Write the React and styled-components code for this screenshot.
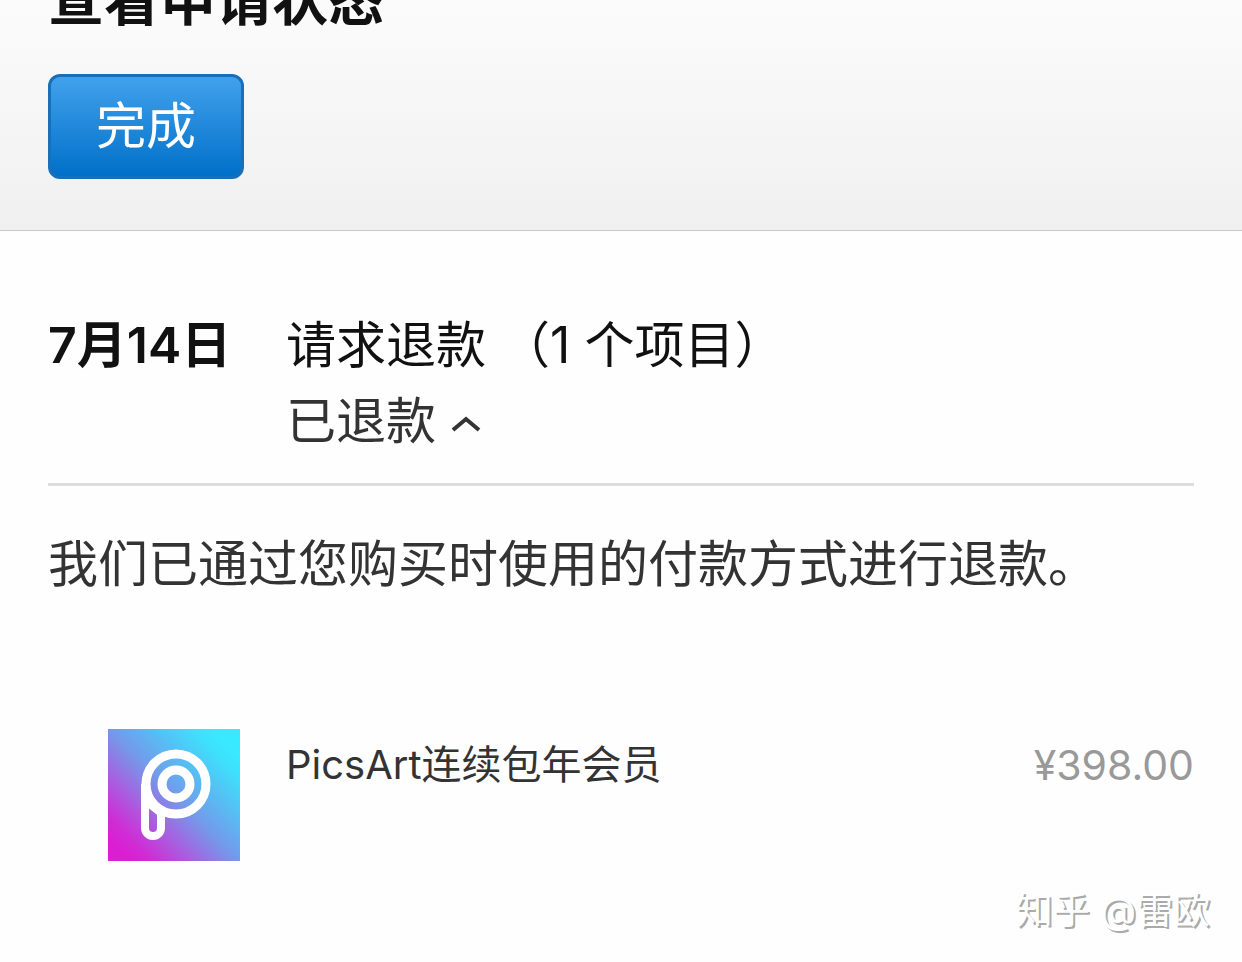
import React, { useState } from "react";
import styled, { createGlobalStyle } from "styled-components";

const GlobalStyle = createGlobalStyle`
  *, *::before, *::after { box-sizing: border-box; }
  body {
    margin: 0;
    background: #fefefe;
    color: #333;
    font-family: Inter, "Noto Sans CJK SC", sans-serif;
    font-size: 50px;
    line-height: 76px;
  }
  h1, h2, p, ul { margin: 0; padding: 0; }
`;

const Page = styled.div`
  overflow: hidden;
`;

const Header = styled.header`
  margin-top: -32px;
  padding: 0 48px 51px;
  border-bottom: 1px solid #c8c8c8;
  background: linear-gradient(#fdfdfd, #f0f0f0);
`;

const Title = styled.h1`
  margin-bottom: 42px;
  color: #111;
  font-size: 56px;
  line-height: 64px;
  font-weight: 700;
`;

const DoneButton = styled.button`
  display: block;
  padding: 11px 45px 12px;
  border: 3px solid #1a70b8;
  border-radius: 12px;
  background: #1a70b8 linear-gradient(#42a1ec, #0070c9) no-repeat padding-box border-box;
  color: #fff;
  font: inherit;
  font-size: 50px;
  cursor: pointer;
`;

const Main = styled.main`
  padding: 76px 48px 0;
`;

const Request = styled.section`
  display: grid;
  grid-template-columns: 238px 1fr;
  padding-bottom: 24px;
  border-bottom: 3px solid #ddd;
`;

const RequestDate = styled.time`
  color: #111;
  font-weight: 600;
`;

const RequestTitle = styled.h2`
  color: #111;
  font-size: 50px;
  font-weight: 400;
`;

const StatusToggle = styled.button`
  display: flex;
  align-items: center;
  gap: 15px;
  padding: 0;
  border: 0;
  background: none;
  color: #333;
  font: inherit;
  cursor: pointer;
`;

const Chevron = styled.svg`
  width: 30px;
  height: 18px;
  margin-top: 6px;
  transform: ${({ $open }) => ($open ? "none" : "rotate(180deg)")};
`;

const Message = styled.p`
  margin-top: 40px;
`;

const ItemList = styled.ul`
  padding: 127px 0 0 60px;
  list-style: none;
`;

const Item = styled.li`
  display: flex;
  gap: 46px;
  font-size: 41px;
  line-height: 72px;
`;

const AppIcon = styled.svg`
  flex: none;
  width: 132px;
  height: 132px;
`;

const ItemName = styled.span`
  flex: 1;
  font-size: 40px;
`;

const Price = styled.span`
  color: #999;
`;

const Credit = styled.footer`
  padding: 22px 32px 24px;
  color: #fff;
  font-size: 37px;
  line-height: 56px;
  text-align: right;
  text-shadow: 2px 2px 0 #aaa;
`;

function PicsArtIcon() {
  return (
    <AppIcon viewBox="0 0 132 132" role="img" aria-label="PicsArt">
      <defs>
        <linearGradient id="picsart" x1="0.08" y1="0.9" x2="0.9" y2="0.1">
          <stop offset="0" stopColor="#da1fd2" />
          <stop offset="0.1" stopColor="#d02cd5" />
          <stop offset="0.3" stopColor="#a562e0" />
          <stop offset="0.5" stopColor="#7598ea" />
          <stop offset="0.7" stopColor="#58bcf3" />
          <stop offset="0.9" stopColor="#3ee0fc" />
          <stop offset="1" stopColor="#39eaff" />
        </linearGradient>
      </defs>
      <rect width="132" height="132" fill="url(#picsart)" />
      <g fill="none" stroke="#fff">
        <circle cx="68" cy="55" r="30" strokeWidth="9" />
        <circle cx="68" cy="55" r="14" strokeWidth="9" />
        <path d="M37 55V99a8 8 0 0 0 16 0V83" strokeWidth="8" />
        <path d="M37 72L55 86" strokeWidth="7" />
      </g>
    </AppIcon>
  );
}

export default function App() {
  const [open, setOpen] = useState(true);
  return (
    <Page>
      <GlobalStyle />
      <Header>
        <Title>查看申请状态</Title>
        <DoneButton type="button">完成</DoneButton>
      </Header>
      <Main>
        <Request>
          <RequestDate dateTime="07-14">7月14日</RequestDate>
          <div>
            <RequestTitle>请求退款 （1 个项目）</RequestTitle>
            <StatusToggle type="button" aria-expanded={open} onClick={() => setOpen(!open)}>
              已退款
              <Chevron viewBox="0 0 30 18" $open={open} aria-hidden="true">
                <path d="M2 15L15 4L28 15" fill="none" stroke="currentColor" strokeWidth="4" />
              </Chevron>
            </StatusToggle>
          </div>
        </Request>
        {open && (
          <>
            <Message>我们已通过您购买时使用的付款方式进行退款。</Message>
            <ItemList>
              <Item>
                <PicsArtIcon />
                <ItemName>PicsArt连续包年会员</ItemName>
                <Price>¥398.00</Price>
              </Item>
            </ItemList>
          </>
        )}
      </Main>
      <Credit>知乎 @雷欧</Credit>
    </Page>
  );
}
